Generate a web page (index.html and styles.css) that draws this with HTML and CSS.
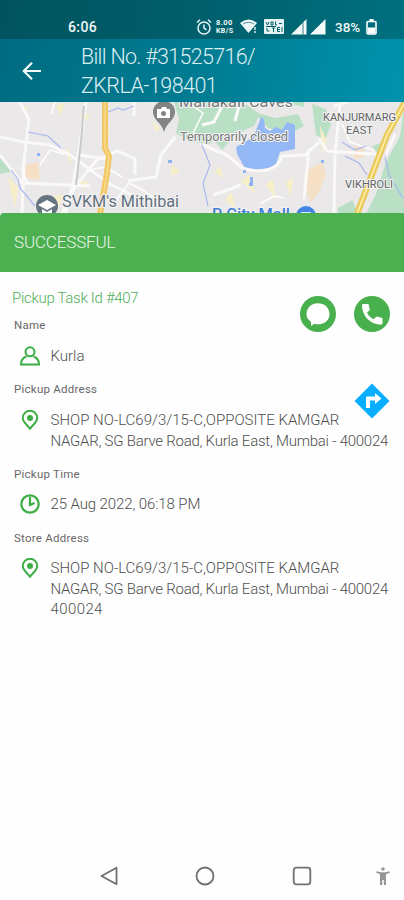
FILE: index.html
```html
<!DOCTYPE html>
<html lang="en">
<head>
<meta charset="utf-8">
<meta name="viewport" content="width=device-width, initial-scale=1">
<title>Bill details</title>
<link rel="stylesheet" href="styles.css">
</head>
<body>
<div class="screen">
  <header class="header">
    <div class="status">
      <span class="clock">6:06</span>
      <div class="status-right">
        <svg class="alarm" width="16" height="18" viewBox="0 0 16 18" fill="none" stroke="#e6f3f4" stroke-width="1.5"><circle cx="8" cy="10" r="6"/><path d="M8 6.5V10l2.5 1.8M1 4.5l3-2.8M15 4.5l-3-2.8"/></svg>
        <span class="speed"><b>8.00</b><b>KB/S</b></span>
        <svg class="wifi" width="17" height="15" viewBox="0 0 17 15"><path d="M0 4Q8.500-3 17 4L8.500 14Z" fill="#eff8f8"/><path d="M3 5Q8.500 1.500 14 5" fill="none" stroke="#075e69" stroke-width=".7"/><path d="M15 8v3M15 12v2" stroke="#eff8f8" stroke-width="1.400"/></svg>
        <svg class="volte" width="20" height="15" viewBox="0 0 20 15"><rect width="20" height="15" rx="1" fill="#e6f3f4"/><path d="M2 3l1.500 3L5 3M7 3h2v3H7zM11.500 2.500V6H13M15 4.500h3M3 9v3h2.500M8 9h3M9.500 9v4M16 8.500h-2.500v4H16M13.500 10.500H16M2 7.500h10M18 8v5" fill="none" stroke="#075e69"/></svg>
        <svg class="signal" width="35" height="16" viewBox="0 0 35 16" fill="#f4fafa"><path d="M0 15.500L15.500 0v15.500ZM19 15.500L34.500 0v15.500Z"/><path d="M12 3.500v12" stroke="#075e69" stroke-width=".8"/></svg>
        <span class="percent">38%</span>
        <svg class="battery" width="11" height="16" viewBox="0 0 11 16"><path d="M3.500 0h4v2H3.500z" fill="#fff"/><rect x="1" y="2.500" width="9" height="12.500" rx="1" fill="none" stroke="#fff" stroke-width="1.600"/><path d="M2 8.500h7v6H2z" fill="#fff"/></svg>
      </div>
    </div>
    <div class="appbar">
      <svg class="back" width="20" height="20" viewBox="0 0 20 20" fill="none" stroke="#f5fbfb" stroke-width="2.200"><path d="M19 10H2.500M10 1.800L1.800 10l8.200 8.200"/></svg>
      <h1 class="title"><span class="bill">Bill No. #31525716/</span><span class="code">ZKRLA-198401</span></h1>
    </div>
  </header>

  <svg class="map" viewBox="0 102 404 112" width="404" height="112">
    <rect y="102" width="404" height="112" fill="#ebe8ea"/>
    <g fill="#b9e0c5">
      <path d="M174 102h48l3 10-10 10 7 8-12 14-18-2-16-9 3-14z"/>
      <path d="M202 102h40l18 12-6 12-18 8-14 16-10-13-10-2zM254 112l22 6 22-4 6 12-14 8-22-6z"/>
      <path d="M312 104l14 5 5 16-6 15-9-5zM284 102h20v5zM404 106v108h-38l10-20 10-32 14-26zM0 158l8 4 2 10-10 2zM338 208l15-8 4 14h-19zM372 146l14-5-8 13z"/>
    </g>
    <g fill="#f5dfc5"><path d="M26 165l12-3 2 18-16-2zM308 170l14-8 4 12-7 18-9 11-3-11zM354 146l10 2v9l-10 2z"/></g>
    <path d="M261 117l3 2 1 9 5 3 6-4 6 3 5-8 8 3v24l-15 3-4 12-11 7-19-1-9-16-1-7 14-8 5-6 2-5z" fill="#94b8f5"/>
    <g fill="#f7efc8"><path d="M22 109l7-5-5 12zM56 106l8-3-3 13zM104 133l6-8-2 13zM78 117l12-3-3 6zM8 177l10 10-3 21-4-17zM66 148l6 7-2 12zM152 121l8 7-4 5zM52 197l13-3-6 12zM80 181l10 2-7 7zM172 165l8 6-9 5zM225 200l7-8 3 16zM241 181l8-6 6 19zM266 185l7-6 3 20zM286 183l7-6-2 20zM214 172l6-6 4 12zM320 126l7 15-5 12z"/></g>
    <g fill="none" stroke="#faf9f8" stroke-width="3">
      <path d="M20 102l9 18-5 40-2 54M86 102l-8 54-5 30-11 28M0 137l24 5 26 3 20 10 40 29 24 12M0 155l22 28 68 3M65 214l10-28 22-26 20-9 18 8v16M78 155l30 4M128 181l28-4 5-22 14-18M202 145l25 10 15 13q16 5 28 1 10-4 12-13l23-1 14-13M240 102l-5 19M202 125l12-3 9-18M319 138l8 13 46 3M340 106l-5 48-1 60M309 149l-5 50M334 106l14-4M213 195l20-7 8-3M386 154l9-20M134 102v14"/>
    </g>
    <g fill="none" stroke="#fffefd" stroke-width="1.500"><path d="M40 165l10-15 14 4M28 184l-7-17M88 170l18-3 16 10M342 124l8 18 23 8 4 9M187 102l16 11-10 20M116 200l13-17 12 6 13 9M260 204l14-8 10 2M55 102l-4 12"/></g>
    <g fill="none" stroke="#a9b8ee" stroke-width="1.200"><path d="M28 132l20 4 13 12M11 170l7 9 2 9 15 18M108 112l10-4 5 2 11-4M202 145l8 20-7 18 5 23M342 142l13 8 11-4M345 156l14 7 8 12M385 157l4 18 14 23"/></g>
    <path d="M37 153h3v3h-3zM168 160h4v3h-4zM250 177h3v9h-4v-3h1zM243 170h3v3h-3zM321 160h3v3h-3z" fill="#8fb4f0"/>
    <path d="M84 106l-3 35-5 44" stroke="#c9c9cb" stroke-width="2" fill="none"/>
    <path d="M105 102v46l4 8-2 17-7 41" fill="none" stroke="#f2c765" stroke-width="6"/><path d="M105 102v46l4 8-2 17-7 41" fill="none" stroke="#fae5a3"/>
    <path d="M405 102l-18 33-11 29-19 50" fill="none" stroke="#eacb62" stroke-width="6.500"/><path d="M405 102l-18 33-11 29-19 50" fill="none" stroke="#fff1a8" stroke-width="1.500"/>
    <path d="M164 132c-2-9-11-12-11-20a11 11 0 0 1 22 0c0 8-9 11-11 20z" fill="#838486"/><path d="M157 109h4l1-2h4l1 2h3v9h-13z" fill="#fff"/><circle cx="163.500" cy="113.500" r="2.500" fill="#838486"/>
    <circle cx="47" cy="206" r="11" fill="#657481"/><path d="M38 205l9-5 9 5-9 5zM42 209l5 3 5-3v4H42z" fill="#fff"/>
    <circle cx="306" cy="216" r="10" fill="#4384e6"/><path d="M301 212h10v2h-10z" fill="#dce9ff"/>
    <g class="map-text">
      <text x="179" y="107" textLength="114" lengthAdjust="spacingAndGlyphs" font-size="15">Mahakali Caves</text>
      <text x="180" y="141" textLength="108" lengthAdjust="spacingAndGlyphs" font-size="12.500">Temporarily closed</text>
      <text x="62" y="207" textLength="117" lengthAdjust="spacingAndGlyphs" font-size="16.500" class="school">SVKM's Mithibai</text>
      <text x="323" y="121" textLength="73" lengthAdjust="spacingAndGlyphs" font-size="11" class="area">KANJURMARG</text>
      <text x="346" y="134" textLength="27" lengthAdjust="spacingAndGlyphs" font-size="11" class="area">EAST</text>
      <text x="345" y="188" textLength="48" lengthAdjust="spacingAndGlyphs" font-size="11" class="area">VIKHROLI</text>
      <text x="212" y="218.500" textLength="78" lengthAdjust="spacingAndGlyphs" font-size="15" class="mall">R City Mall</text>
    </g>
  </svg>

  <div class="banner"><span>SUCCESSFUL</span></div>

  <main class="details">
    <div class="task-row">
      <div class="task-info">
        <h2 class="task">Pickup Task Id #407</h2>
        <div class="label name-label">Name</div>
      </div>
      <div class="actions">
        <svg width="36" height="36" viewBox="0 0 36 36"><circle cx="18" cy="18" r="18" fill="#48b04d"/><path d="M18 7.200c6.500 0 11.500 4.700 11.500 10.700S24.500 28.300 18 28.300c-1.400 0-2.500-.2-3.600-.6L11 30v-4.200c-2.800-2-4.500-4.500-4.500-7.900C6.500 11.900 11.500 7.200 18 7.200z" fill="#fff"/></svg>
        <svg width="36" height="36" viewBox="0 0 36 36"><circle cx="18" cy="18" r="18" fill="#48b04d"/><path d="M9.500 8h5l1.300 6-2.800 2.700c1.500 3 3.600 5.100 6.600 6.600l2.900-2.800 6 1.600v5.500c0 .7-.5 1-1.100 1C16.500 28.600 8 20 8 9.200 8 8.500 8.700 8 9.500 8z" fill="#fff"/></svg>
      </div>
    </div>
    <div class="row name-row">
      <svg width="20" height="20" viewBox="0 0 20 20" fill="none" stroke="#3aad43" stroke-width="2"><circle cx="10" cy="5.800" r="4.500"/><path d="M6.500 10.500C3 11.500 1 14.500 1 18.500h18c0-4-2-7-5.500-8"/></svg>
      <span class="value">Kurla</span>
    </div>
    <div class="label address-label">Pickup Address</div>
    <div class="row address">
      <svg width="20" height="20" viewBox="0 0 20 20" fill="none" stroke="#3aad43" stroke-width="2"><path d="M10 18.700C8 15.500 2.800 12.500 2.800 8a7.200 7.200 0 0 1 14.400 0c0 4.500-5.200 7.500-7.200 10.700z"/><circle cx="10" cy="8" r="2" fill="#3aad43"/></svg>
      <p class="value"><span class="line1">SHOP NO-LC69/3/15-C,OPPOSITE KAMGAR</span><span class="line2">NAGAR, SG Barve Road, Kurla East, Mumbai - 400024</span></p>
      <svg class="directions" width="36" height="36" viewBox="0 0 36 36"><path d="M18 .5L35.500 18 18 35.500.5 18z" fill="#08aeff"/><path d="M12 25V14.500q0-1 1-1h8V10l6.500 5.500L21 21v-3.500h-5V25z" fill="#fff"/></svg>
    </div>
    <div class="label time-label">Pickup Time</div>
    <div class="row time-row">
      <svg width="20" height="20" viewBox="0 0 20 20" fill="none" stroke="#3aad43" stroke-width="2.200"><circle cx="10" cy="10" r="8.700"/><path d="M10 3v8l4.500-2"/></svg>
      <span class="value time">25 Aug 2022, 06:18 PM</span>
    </div>
    <div class="label store-label">Store Address</div>
    <div class="row store">
      <svg width="20" height="20" viewBox="0 0 20 20" fill="none" stroke="#3aad43" stroke-width="2"><path d="M10 18.700C8 15.500 2.800 12.500 2.800 8a7.200 7.200 0 0 1 14.400 0c0 4.500-5.200 7.500-7.200 10.700z"/><circle cx="10" cy="8" r="2" fill="#3aad43"/></svg>
      <p class="value"><span class="line1">SHOP NO-LC69/3/15-C,OPPOSITE KAMGAR</span><span class="line2">NAGAR, SG Barve Road, Kurla East, Mumbai - 400024</span><span class="line3">400024</span></p>
    </div>
  </main>

  <nav class="nav">
    <svg width="18" height="20" viewBox="0 0 18 20" fill="none" stroke="#707070" stroke-width="1.800" stroke-linejoin="round"><path d="M16.500 1.800v16.400L1.500 10z"/></svg>
    <svg width="20" height="20" viewBox="0 0 20 20" fill="none" stroke="#707070" stroke-width="1.800"><circle cx="10" cy="10" r="8.500"/></svg>
    <svg width="20" height="20" viewBox="0 0 20 20" fill="none" stroke="#707070" stroke-width="1.800"><rect x="1.700" y="1.700" width="16.600" height="16.600" rx="2.500"/></svg>
    <svg class="accessibility" width="14" height="19" viewBox="0 0 14 19" fill="#969696"><circle cx="7" cy="2" r="1.800"/><path d="M.6 4.200L4.500 5.300h5l3.900-1.100.4 1.500L10 7.200V18H7.800v-5H6.200v5H4V7.200L.2 5.700z"/></svg>
  </nav>
</div>
</body>
</html>
```
FILE: styles.css
```css
* { box-sizing: border-box; }
body { margin: 0; background: #fefefe; font-family: Roboto, "Liberation Sans", sans-serif; }
h1, h2, p { margin: 0; font-weight: 300; }
svg { display: block; flex: none; }
.screen { width: 404px; height: 900px; display: flex; flex-direction: column; overflow: hidden; background: #fefefe; }
.header { height: 102px; flex: none; background: linear-gradient(100deg, #006b80 0%, #007b91 48%, #0092ad 100%); }
.status { height: 39px; padding: 14px 27px 0 68px; display: flex; justify-content: space-between; background: linear-gradient(100deg, #00535e 0%, #005f6c 50%, #00707f 100%); color: #f0f8f8; }
.clock { font-size: 14px; line-height: 26px; font-weight: 500; letter-spacing: .4px; }
.status-right { height: 25px; display: flex; align-items: center; }
.speed { width: 20px; margin: 0 4px; display: flex; flex-direction: column; font-size: 7.5px; line-height: 8px; letter-spacing: .4px; }
.speed b:last-child { font-size: 7px; }
.volte { margin-left: 7px; }
.signal { margin-left: 7px; }
.percent { margin: 0 4px 0 9px; width: 27px; font-size: 13.5px; font-weight: 500; }
.appbar { height: 63px; padding: 3px 0 0 22px; display: flex; }
.back { margin-top: 19px; }
.title { margin-left: 39px; color: #dceff2; font-size: 21.500px; line-height: 29px; }
.title span { display: block; white-space: nowrap; }
.bill { letter-spacing: -.7px; }
.code { letter-spacing: -.55px; }
.map { height: 112px; margin-bottom: -1px; }
.map-text { font-family: Roboto, sans-serif; fill: #77797b; stroke: #f5f3f3; stroke-width: 2px; paint-order: stroke; }
.map-text .school { fill: #60717f; }
.map-text .area { fill: #626466; }
.map-text .mall { fill: #407dd9; font-weight: 500; }
.banner { position: relative; height: 59px; flex: none; padding: 0 0 1px 14px; display: flex; align-items: center; border-radius: 4px 0 0; background: #4caf50; color: #e7f6e7; font-size: 17px; font-weight: 300; letter-spacing: -.15px; }
.details { flex: 1; padding: 17px 14px 0; color: #4e4e4e; }
.task-row { height: 48px; display: flex; justify-content: space-between; }
.task { margin-left: -2px; color: #4fae58; font-size: 15px; line-height: 19px; letter-spacing: -.3px; }
.label { font-size: 11.500px; line-height: 16px; color: #686868; letter-spacing: .25px; }
.name-label { margin-top: 9px; }
.actions { display: flex; gap: 18px; padding-top: 7px; }
.row { display: flex; padding-left: 6px; position: relative; }
.row .value { margin-left: 10.5px; font-size: 15px; line-height: 20.500px; font-weight: 300; white-space: nowrap; }
.value > span { display: block; }
.line2 { letter-spacing: -.24px; }
.line3 { letter-spacing: .4px; }
.value.time { letter-spacing: -.1px; }
.name-row { margin-top: 9px; height: 20px; }
.address-label { margin-top: 15px; }
.address { margin-top: 13px; height: 41px; }
.directions { position: absolute; right: 0; top: -27px; }
.time-label { margin-top: 15px; }
.time-row { margin-top: 12px; height: 20px; }
.store-label { margin-top: 16px; }
.store { margin-top: 12px; }
.nav { height: 48px; flex: none; display: grid; grid-template-columns: 18px 20px 20px 14px; justify-content: start; align-items: center; column-gap: 77px; padding-left: 100px; }
.accessibility { margin-left: -13px; }
```
